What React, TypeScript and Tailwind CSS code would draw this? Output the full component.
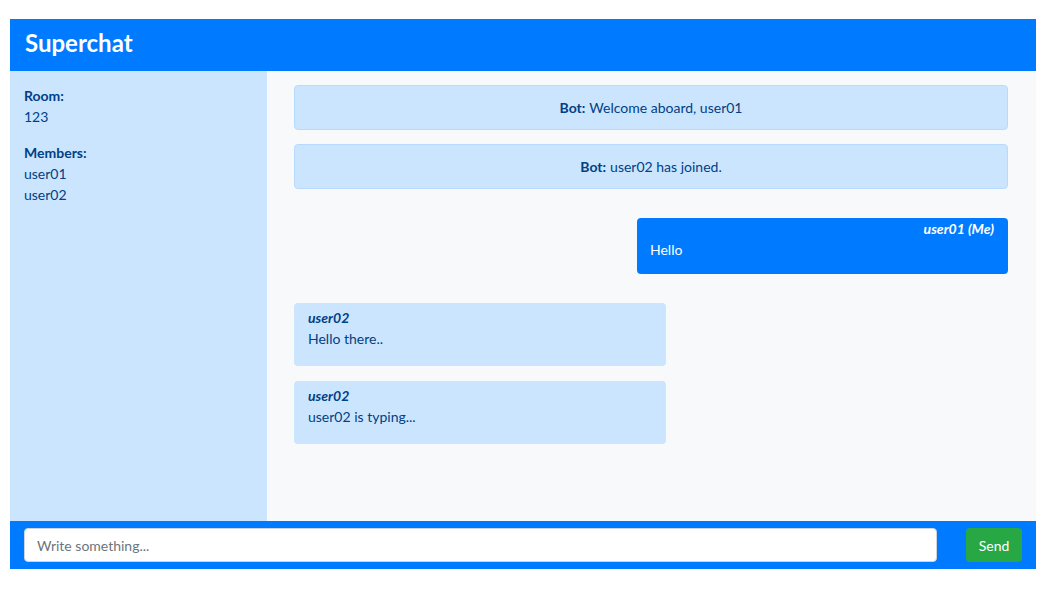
import React from 'react';

interface Message {
  id: number;
  kind: 'bot' | 'me' | 'other';
  user: string;
  text: string;
}

const messages: Message[] = [
  { id: 1, kind: 'bot', user: 'Bot', text: 'Welcome aboard, user01' },
  { id: 2, kind: 'bot', user: 'Bot', text: 'user02 has joined.' },
  { id: 3, kind: 'me', user: 'user01 (Me)', text: 'Hello' },
  { id: 4, kind: 'other', user: 'user02', text: 'Hello there..' },
  { id: 5, kind: 'other', user: 'user02', text: 'user02 is typing...' },
];

const members = ['user01', 'user02'];

function ChatMessage({ msg }: { msg: Message }) {
  if (msg.kind === 'bot') {
    return (
      <div className="h-[45px] mb-[14px] flex items-center justify-center rounded border border-[#b8daff] bg-[#cce5ff] text-[#004085] text-[14px]">
        <span className="font-bold mr-1">{msg.user}:</span>
        {msg.text}
      </div>
    );
  }

  if (msg.kind === 'me') {
    return (
      <div className="flex justify-end mt-[29px] mb-[29px]">
        <div className="w-[371px] h-[56px] rounded bg-[#007bff] text-white pl-[13px] pr-[14px]">
          <div className="text-right font-bold italic text-[14px] leading-[21px]">{msg.user}</div>
          <div className="text-[14px] leading-[21px]">{msg.text}</div>
        </div>
      </div>
    );
  }

  return (
    <div className="w-[372px] h-[63px] mb-[15px] rounded bg-[#cce5ff] text-[#004085] pl-[14px] pt-[4px]">
      <div className="font-bold italic text-[14px] leading-[21px]">{msg.user}</div>
      <div className="text-[14px] leading-[21px]">{msg.text}</div>
    </div>
  );
}

export default function App() {
  return (
    <div className="min-h-screen bg-white pt-[19px] px-[10px] font-['Lato',_'Liberation_Sans',_sans-serif]">
      <div className="w-[1026px]">
        {/* header */}
        <header className="h-[52px] bg-[#007bff] flex items-center px-[15px] pb-[5px]">
          <h1 className="text-white text-[24px] font-bold leading-none">Superchat</h1>
        </header>

        <div className="flex h-[450px]">
          {/* sidebar */}
          <aside className="w-[257px] bg-[#cce5ff] text-[#004085] text-[14px] leading-[21px] px-[14px] pt-[14px]">
            <div className="font-bold">Room:</div>
            <div>123</div>
            <div className="font-bold mt-[15px]">Members:</div>
            {members.map(m => (
              <div key={m}>{m}</div>
            ))}
          </aside>

          {/* messages */}
          <main className="flex-1 bg-[#f8f9fa] pl-[27px] pr-[28px] pt-[14px]">
            {messages.map(msg => (
              <ChatMessage key={msg.id} msg={msg} />
            ))}
          </main>
        </div>

        {/* composer */}
        <footer className="h-[48px] bg-[#007bff] flex items-center px-[14px] gap-[29px]">
          <input
            type="text"
            placeholder="Write something..."
            className="flex-1 h-[34px] rounded bg-white border border-[#ced4da] px-[12px] text-[14px] text-[#495057] placeholder:text-[#6c757d] outline-none"
          />
          <button className="h-[34px] w-[56px] rounded bg-[#28a745] text-white text-[14px]">Send</button>
        </footer>
      </div>
    </div>
  );
}
